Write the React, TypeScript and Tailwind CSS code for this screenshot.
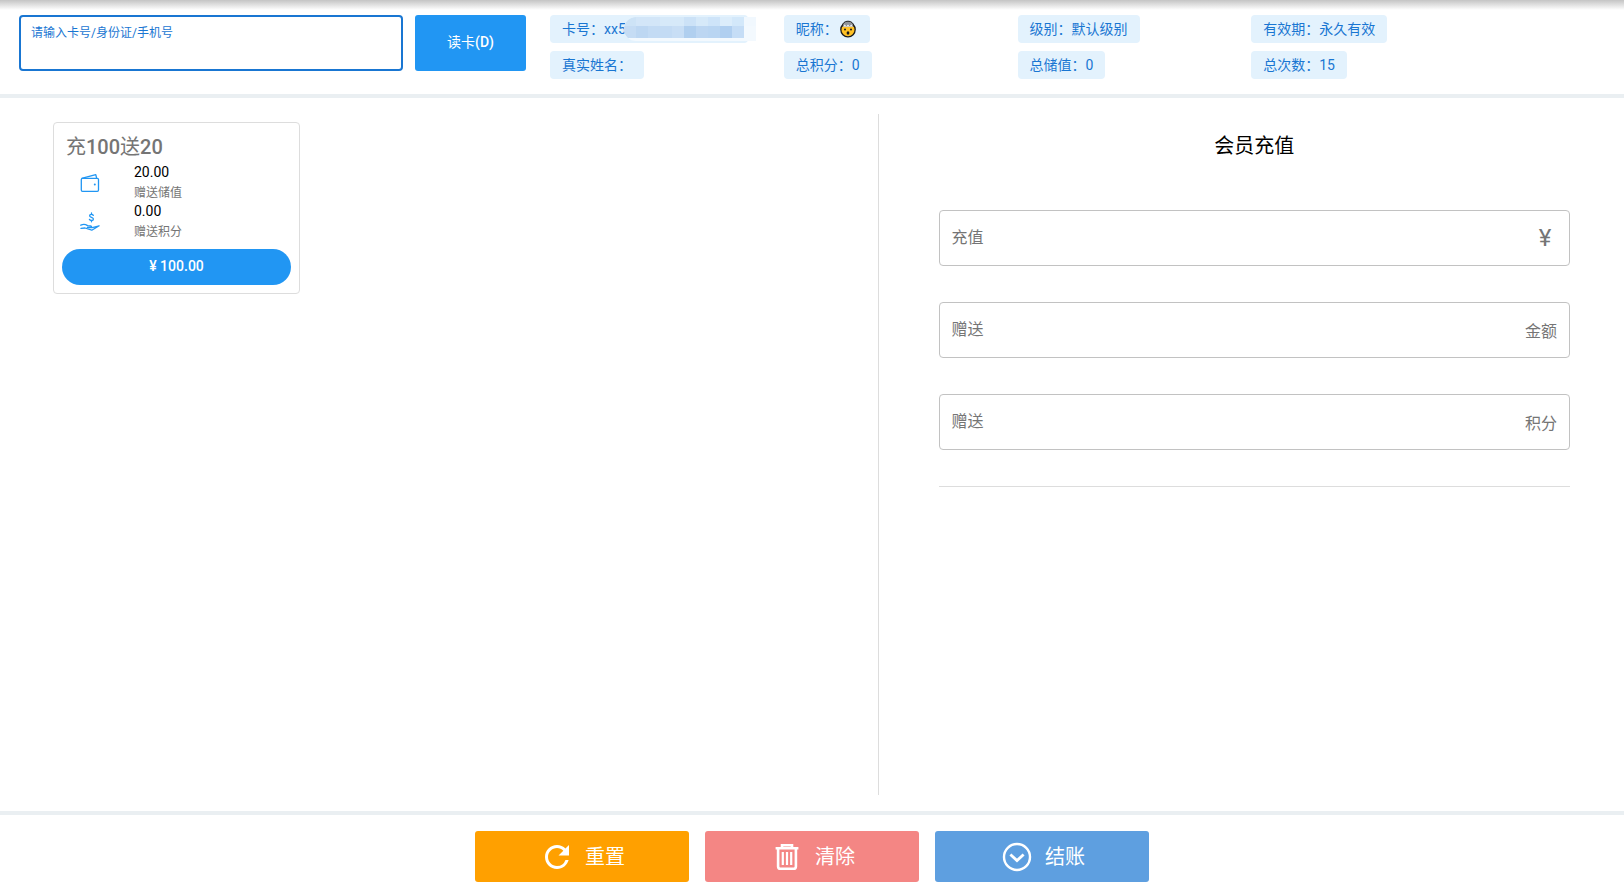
import { useState, type ReactNode } from "react";
import { MdRefresh } from "react-icons/md";

const FONT = "font-[Roboto,'Noto_Sans_CJK_SC',sans-serif]";

const MASK_TOP = ["#cde3f6", "#d3e6f8", "#d3e6f8", "#d6e9f9", "#d6e9f9", "#cce2f7", "#d6e9f9", "#cee4f9", "#dcedfb", "#d3e8fa", "#f1f8fe"];
const MASK_MID = ["#c5dcf4", "#bdd7f2", "#c3dbf4", "#c3dbf4", "#c8def5", "#b0cfef", "#bcd6f2", "#b9d5f2", "#b0cff0", "#c5ddf6", "#f3f9fe"];

function CardMask() {
  return (
    <svg width="132" height="24" viewBox="0 0 132 24" className="-mr-5 -ml-0.5 shrink-0" aria-hidden="true">
      <defs>
        <clipPath id="mask-edge">
          <path d="M12 0H132V24H12A12 12 0 0 1 12 0Z" />
        </clipPath>
      </defs>
      <g clipPath="url(#mask-edge)">
        <rect width="132" height="24" fill="#f3f9fe" />
        {MASK_TOP.map((fill, i) => (
          <rect key={i} x={i * 12} y="0" width="12" height="9" fill={fill} />
        ))}
        {MASK_MID.map((fill, i) => (
          <rect key={i} x={i * 12} y="9" width="12" height="12" fill={fill} />
        ))}
      </g>
    </svg>
  );
}

function MindBlown() {
  return (
    <svg width="20" height="18" viewBox="0 0 20 18" aria-hidden="true">
      <circle cx="10" cy="9.6" r="7.2" fill="#ffc226" stroke="#1a1a1a" strokeWidth="1.3" />
      <path d="M4.2 6.2C4.6 3 6.6 1.2 10 1.2S15.4 3 15.8 6.2Z" fill="#8f9499" stroke="#1a1a1a" strokeWidth=".9" />
      <path d="M4.8 6.8 6.6 4.6 8.4 6 10 4.4 11.6 6 13.4 4.6 15.2 6.8Z" fill="#f2f2f2" />
      <circle cx="7" cy="9.4" r="1" fill="#1a1a1a" />
      <circle cx="13" cy="9.4" r="1" fill="#1a1a1a" />
      <ellipse cx="10" cy="13" rx="1.4" ry="1.8" fill="#1a1a1a" />
    </svg>
  );
}

function WalletIcon() {
  return (
    <svg width="20" height="20" viewBox="0 0 20 20" fill="none" stroke="#2196f3" strokeWidth="1.3" strokeLinejoin="round" aria-hidden="true">
      <rect x="1.3" y="5.3" width="17.2" height="13" rx="1.2" />
      <path d="M1.6 5.4 15.8 1.6 16.6 5.2" />
      <circle cx="14.8" cy="11.6" r="1" fill="#2196f3" stroke="none" />
    </svg>
  );
}

function HandCoinIcon() {
  return (
    <svg width="20" height="20" viewBox="0 0 20 20" fill="none" stroke="#2196f3" strokeWidth="1.3" strokeLinejoin="round" strokeLinecap="round" aria-hidden="true">
      <path d="M13.3 3.4C12.9 2.6 12.2 2.3 11.4 2.3 10.3 2.3 9.6 2.9 9.6 3.8 9.6 5.8 13.4 4.8 13.4 6.9 13.4 7.9 12.6 8.5 11.5 8.5 10.5 8.5 9.7 8.1 9.4 7.3M11.5 1V2.3M11.5 8.5V9.8" />
      <path d="M.8 13.2C3.2 12 5.4 12.2 7.6 13.6L10.4 14C12.2 14.4 11.6 15.8 10.4 15.7L7.4 15.4M12.2 15.6 19.2 13.8 11.8 18.2 5 16 1 16.4" />
    </svg>
  );
}

function TrashIcon() {
  return (
    <svg width="36" height="36" viewBox="0 0 36 36" fill="none" stroke="white" strokeWidth="2.6" aria-hidden="true">
      <path d="M6.6 9.3H29.4M13 9V6.3H23V9" />
      <path d="M9.1 9.5V27.4Q9.1 29.7 11.4 29.7H24.6Q26.9 29.7 26.9 27.4V9.5" />
      <path d="M13.8 13V26M18 13V26M22.2 13V26" strokeWidth="2.2" />
    </svg>
  );
}

function CheckoutIcon() {
  return (
    <svg width="36" height="36" viewBox="0 0 36 36" fill="none" stroke="white" aria-hidden="true">
      <circle cx="18" cy="18" r="13" strokeWidth="2.4" />
      <path d="M11.4 15.4 18 21.6 24.6 15.4" strokeWidth="2.8" />
    </svg>
  );
}

function Chip({ label, children }: { label: string; children?: ReactNode }) {
  return (
    <div className="flex h-7 w-fit items-center rounded bg-[#e3f2fd] px-3 text-sm whitespace-nowrap text-[#1976d2]">
      {label}：{children}
    </div>
  );
}

function Perk({ icon, value, label }: { icon: ReactNode; value: string; label: string }) {
  return (
    <div className="flex items-center">
      <div className="flex w-[72px] pl-[18px]">{icon}</div>
      <div>
        <div className="text-sm leading-[18px] text-black">{value}</div>
        <div className="mt-1 text-xs leading-[17px] text-[#757575]">{label}</div>
      </div>
    </div>
  );
}

function Field({ label, suffix }: { label: string; suffix: ReactNode }) {
  const [value, setValue] = useState("");
  return (
    <label className="flex h-14 items-center rounded border border-[#c2c2c2] px-3 text-base text-[#757575]">
      <span>{label}</span>
      <input
        className="min-w-0 flex-1 px-2 text-black outline-none"
        value={value}
        onChange={(e) => setValue(e.target.value)}
      />
      {suffix}
    </label>
  );
}

export default function App() {
  const [card, setCard] = useState("");

  return (
    <div className={`flex min-h-screen flex-col bg-white ${FONT}`}>
      <header className="flex border-b-4 border-[#eaeff2] bg-[linear-gradient(#c4c4c4,#ffffff_10px)] pt-[15px] pr-[139px] pb-[15px] pl-[19px]">
        <label className="flex h-14 w-96 flex-col rounded border-2 border-[#1976d2] bg-white px-2.5 pt-1.5 text-xs text-[#1976d2]">
          <span className="leading-5">请输入卡号/身份证/手机号</span>
          <input
            className="w-full text-sm text-black outline-none"
            value={card}
            onChange={(e) => setCard(e.target.value)}
          />
        </label>
        <button className="ml-3 h-14 w-[111px] shrink-0 rounded-[3px] bg-[#2196f3] pb-0.5 text-sm text-white">
          读卡<span className="font-medium">(D)</span>
        </button>
        {/* Member info */}
        <div className="ml-6 grid flex-1 grid-cols-4 gap-y-2">
          <Chip label="卡号">xx5<CardMask /></Chip>
          <Chip label="昵称"><MindBlown /></Chip>
          <Chip label="级别">默认级别</Chip>
          <Chip label="有效期">永久有效</Chip>
          <Chip label="真实姓名" />
          <Chip label="总积分">0</Chip>
          <Chip label="总储值">0</Chip>
          <Chip label="总次数">15</Chip>
        </div>
      </header>

      <main className="flex flex-1 py-4">
        <section className="w-[54.1%] border-r border-[#dddddd] pt-2 pl-[53px]">
          <div className="w-[247px] rounded border border-[#dddddd] p-2 pt-3">
            <h2 className="px-1 text-xl leading-6 text-[#757575]">
              充<span className="font-medium">100</span>送<span className="font-medium">20</span>
            </h2>
            <div className="pt-1">
              <Perk icon={<WalletIcon />} value="20.00" label="赠送储值" />
              <Perk icon={<HandCoinIcon />} value="0.00" label="赠送积分" />
            </div>
            <button className="mt-2 h-9 w-full rounded-full bg-[#2196f3] pb-0.5 text-sm font-medium text-white">
              ¥ 100.00
            </button>
          </div>
        </section>

        <section className="flex-1 pt-[18px] pr-[54px] pl-[60px]">
          <h1 className="text-center text-xl leading-7 text-black">会员充值</h1>
          <div className="mt-[50px] flex flex-col gap-9 border-b border-[#dddddd] pb-9">
            <Field label="充值" suffix={<span className="w-6 text-center text-2xl">¥</span>} />
            <Field label="赠送" suffix={<span className="pt-1">金额</span>} />
            <Field label="赠送" suffix={<span className="pt-1">积分</span>} />
          </div>
        </section>
      </main>

      <footer className="flex justify-center gap-4 border-t-4 border-[#eaeff2] pt-4 pb-1 text-xl text-white">
        <button className="flex h-[51px] w-[214px] items-center justify-center gap-2.5 rounded-[3px] bg-[#ffa000]">
          <MdRefresh size={36} />
          重置
        </button>
        <button className="flex h-[51px] w-[214px] items-center justify-center gap-2.5 rounded-[3px] bg-[#f48684]">
          <TrashIcon />
          清除
        </button>
        <button className="flex h-[51px] w-[214px] items-center justify-center gap-2.5 rounded-[3px] bg-[#5e9fe0]">
          <CheckoutIcon />
          结账
        </button>
      </footer>
    </div>
  );
}
